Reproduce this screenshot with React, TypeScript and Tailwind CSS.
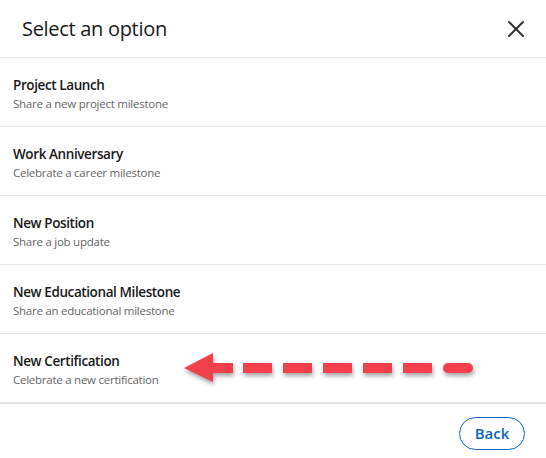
import { X } from 'lucide-react';

const options = [
    { title: 'Project Launch', sub: 'Share a new project milestone' },
    { title: 'Work Anniversary', sub: 'Celebrate a career milestone' },
    { title: 'New Position', sub: 'Share a job update' },
    { title: 'New Educational Milestone', sub: 'Share an educational milestone' },
    { title: 'New Certification', sub: 'Celebrate a new certification' },
];

function Arrow() {
    // red dashed arrow pointing at the last option
    return (
        <svg
            className="absolute left-[176px] top-[344px]"
            width="310"
            height="52"
            viewBox="176 344 310 52"
            style={{ filter: 'drop-shadow(1px 3px 2px rgba(0,0,0,0.35))' }}
        >
            <path d="M184 368 L213 353 L213 382 Z" fill="#f2414a" />
            <rect x="212" y="363" width="21" height="10" fill="#f2414a" />
            <rect x="243" y="363" width="29" height="10" fill="#f2414a" />
            <rect x="283" y="363" width="29" height="10" fill="#f2414a" />
            <rect x="323" y="363" width="29" height="10" fill="#f2414a" />
            <rect x="363" y="363" width="29" height="10" fill="#f2414a" />
            <rect x="403" y="363" width="29" height="10" fill="#f2414a" />
            <rect x="443" y="363" width="30" height="10" rx="5" fill="#f2414a" />
        </svg>
    );
}

export default function App() {
    return (
        <div className="relative w-[546px] h-[458px] bg-white font-['Open_Sans',sans-serif] text-[#191919]">
            <div className="flex items-center justify-between h-[58px] pl-[22px] pr-[16px] border-b border-[#e6e6e6]">
                <h2 className="text-[20px] font-medium tracking-[-0.3px]">Select an option</h2>
                <X className="h-[28px] w-[28px] text-[#333]" strokeWidth={1.7} />
            </div>

            <div>
                {options.map((o) => (
                    <div key={o.title} className="h-[69px] px-[13px] pt-[17px] border-b border-[#e6e6e6]">
                        <div className="text-[13.5px] font-semibold leading-[20px] tracking-[-0.4px]">{o.title}</div>
                        <div className="text-[11.5px] leading-[17px] text-[#666] tracking-[-0.25px]">{o.sub}</div>
                    </div>
                ))}
            </div>

            <div className="flex justify-end border-t border-[#e0e0e0] pt-[13px] pr-[21px]">
                <button className="h-[33px] w-[66px] rounded-full border border-[#0a66c2] text-[#0a66c2] text-[15px] font-semibold">
                    Back
                </button>
            </div>

            <Arrow />
        </div>
    );
}
